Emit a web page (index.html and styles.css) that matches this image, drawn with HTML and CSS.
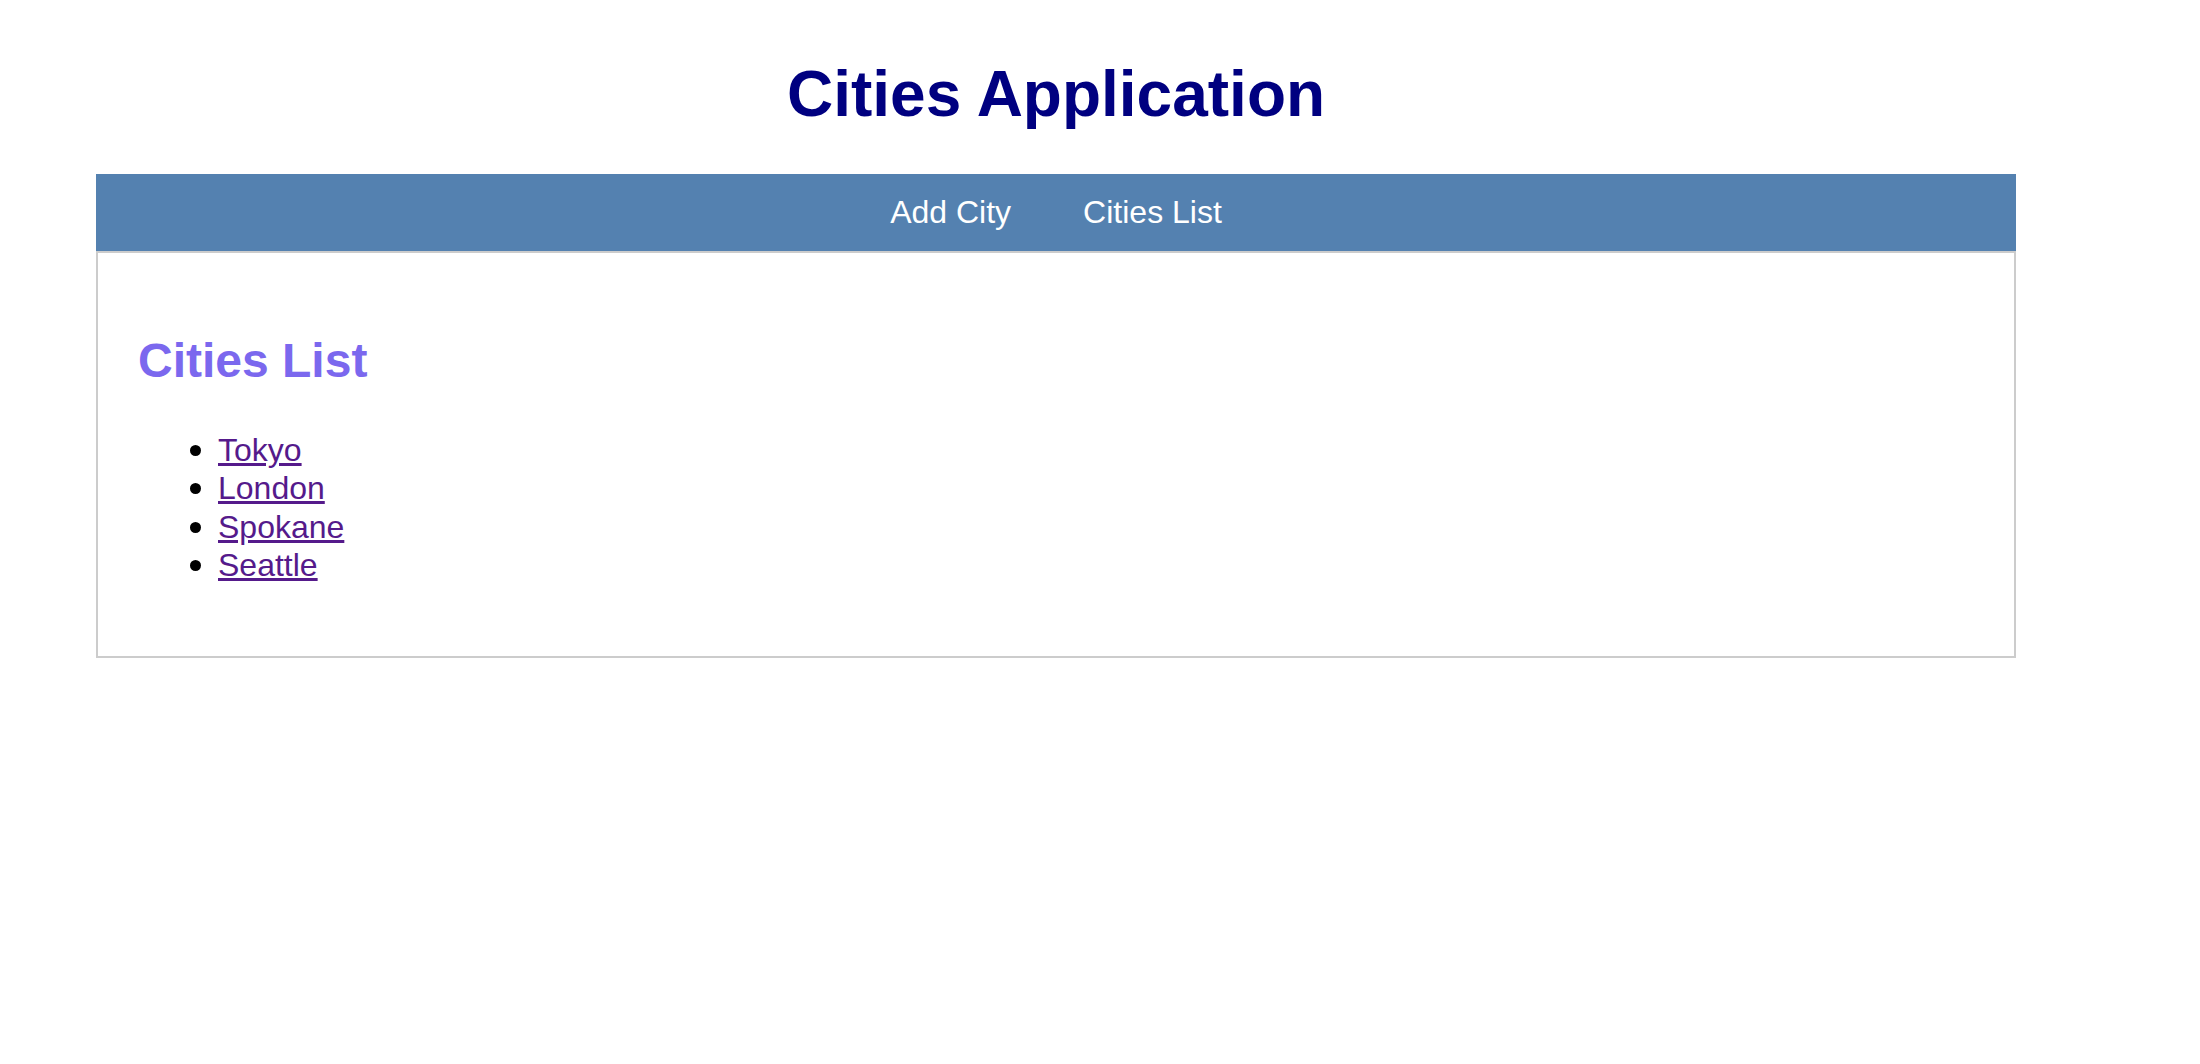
FILE: index.html
```html
<!DOCTYPE html>
<html lang="en">
<head>
<meta charset="utf-8">
<title>Cities Application</title>
<link rel="stylesheet" href="styles.css">
</head>
<body>
<div class="app">
  <header class="app-header">
    <h1 class="app-title">Cities Application</h1>
  </header>
  <nav class="app-nav">
    <a class="nav-link" href="#add">Add City</a>
    <a class="nav-link" href="#list">Cities List</a>
  </nav>
  <main class="app-main">
    <h2 class="section-title">Cities List</h2>
    <ul class="city-list">
      <li class="city-item"><a class="city-link" href="#tokyo">Tokyo</a></li>
      <li class="city-item"><a class="city-link" href="#london">London</a></li>
      <li class="city-item"><a class="city-link" href="#spokane">Spokane</a></li>
      <li class="city-item"><a class="city-link" href="#seattle">Seattle</a></li>
    </ul>
  </main>
</div>
</body>
</html>
```
FILE: styles.css
```css
html, body {
  margin: 0;
  padding: 0;
  background: #ffffff;
}

body {
  font-family: "Liberation Sans", Arial, sans-serif;
}

.app {
  width: 1920px;
  margin-left: 96px;
  padding-top: 57px;
}

.app-header {
  margin-bottom: 43px;
}

.app-title {
  margin: 0;
  text-align: center;
  font-size: 64px;
  line-height: 74px;
  font-weight: bold;
  color: #000080;
}

.app-nav {
  height: 77px;
  background: #5481b0;
  display: flex;
  justify-content: center;
  align-items: center;
  gap: 72px;
}

.nav-link {
  color: #ffffff;
  text-decoration: none;
  font-size: 32px;
  line-height: 37px;
}

.app-main {
  border: 2px solid #cccccc;
  padding: 40px;
}

.section-title {
  margin: 40px 0 0;
  font-size: 48px;
  line-height: 55px;
  font-weight: bold;
  color: #7b68ee;
}

.city-list {
  margin: 43px 0 31px;
  padding-left: 80px;
  list-style: none;
  font-size: 32px;
  line-height: 38.4px;
}

.city-item {
  position: relative;
}

.city-item::before {
  content: "";
  position: absolute;
  left: -28px;
  top: 14px;
  width: 11px;
  height: 11px;
  border-radius: 50%;
  background: #000000;
}

.city-link {
  color: #551a8b;
  text-decoration: underline;
}
```
